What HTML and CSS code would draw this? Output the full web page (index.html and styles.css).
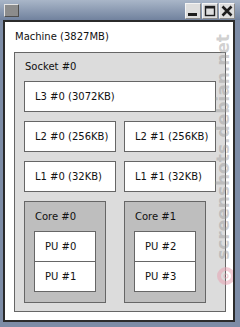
FILE: index.html
```html
<!DOCTYPE html>
<html lang="en">
<head>
  <meta charset="UTF-8">
  <title>lstopo</title>
  <link rel="stylesheet" href="styles.css">
</head>
<body>
  <div class="window">
    <div class="titlebar">
      <div class="app-icon"></div>
      <div class="buttons">
        <span class="btn">
          <svg width="14" height="14" viewBox="0 0 14 14"><rect x="2" y="9" width="9" height="3" fill="#1e1e1e"/></svg>
        </span>
        <span class="btn">
          <svg width="14" height="14" viewBox="0 0 14 14"><rect x="2.5" y="2.5" width="9" height="9" fill="none" stroke="#1e1e1e" stroke-width="1.4"/><rect x="2" y="2" width="10" height="2.5" fill="#1e1e1e"/></svg>
        </span>
        <span class="btn">
          <svg width="14" height="14" viewBox="0 0 14 14"><path d="M2.5 2.5 L11.5 11.5 M11.5 2.5 L2.5 11.5" stroke="#1e1e1e" stroke-width="2.6"/></svg>
        </span>
      </div>
    </div>

    <div class="client">
      <div class="machine">
        <div class="label">Machine (3827MB)</div>

        <div class="socket">
          <div class="label">Socket #0</div>
          <div class="stack">
            <div class="cache">L3 #0 (3072KB)</div>
            <div class="row">
              <div class="cache">L2 #0 (256KB)</div>
              <div class="cache">L2 #1 (256KB)</div>
            </div>
            <div class="row">
              <div class="cache">L1 #0 (32KB)</div>
              <div class="cache">L1 #1 (32KB)</div>
            </div>
            <div class="row">
              <div class="core">
                <div class="label">Core #0</div>
                <div class="pu">PU #0</div>
                <div class="pu">PU #1</div>
              </div>
              <div class="core">
                <div class="label">Core #1</div>
                <div class="pu">PU #2</div>
                <div class="pu">PU #3</div>
              </div>
            </div>
          </div>
        </div>
      </div>

      <!-- watermark overlay -->
      <div class="watermark">screenshots.debian.net</div>
      <svg class="logo" width="22" height="22" viewBox="0 0 22 22">
        <circle cx="11" cy="11" r="7" fill="none" stroke="#e7a3b3" stroke-width="4" opacity="0.55"/>
        <circle cx="11" cy="11" r="2" fill="none" stroke="#e7a3b3" stroke-width="1.2" opacity="0.55"/>
      </svg>
    </div>
  </div>
</body>
</html>
```

FILE: styles.css
```css
* {
  box-sizing: border-box;
}

body {
  margin: 0;
  font-family: "DejaVu Sans", sans-serif;
  font-size: 10px;
  color: #111;
}

.window {
  width: 240px;
  height: 327px;
  background: #7d8ca6;
  display: flex;
  flex-direction: column;
}

/* Barre de titre */
.titlebar {
  height: 20px;
  display: flex;
  justify-content: space-between;
  padding: 3px 5px 0 4px;
  background: linear-gradient(#a9b6c8, #71829e);
}

.app-icon {
  width: 15px;
  height: 13px;
  margin-top: 1px;
  background: #8c8c8c;
  border: 1px solid;
  border-color: #e4e4e4 #4e4e4e #4e4e4e #e4e4e4;
}

.buttons {
  display: flex;
  gap: 1px;
}

.btn {
  width: 16px;
  height: 16px;
  display: flex;
  align-items: center;
  justify-content: center;
  background: #dedede;
  border: 1px solid;
  border-color: #f4f4f4 #8a8a8a #8a8a8a #f4f4f4;
}

.client {
  flex: 1;
  margin: 0 5px 5px 3px;
  border: 2px solid #2b2b2b;
  background: #fff;
  position: relative;
  overflow: hidden;
}

.label {
  line-height: 12px;
  padding-top: 9px;
  padding-left: 1px;
}

.machine {
  padding: 0 7px 0 9px;
}

.machine > .label {
  height: 30px;
}

.socket {
  background: #dcdcdc;
  border: 1px solid #666;
  padding: 0 9px 8px;
}

.socket > .label {
  height: 28px;
  padding-top: 8px;
}

.stack {
  display: flex;
  flex-direction: column;
  gap: 9px;
}

.row {
  display: grid;
  grid-template-columns: 1fr 1fr;
  gap: 8px;
}

.cache, .pu {
  height: 31px;
  background: #fff;
  border: 1px solid #666;
  padding-left: 10px;
  display: flex;
  align-items: center;
}

.core {
  width: 82px;
  background: #bebebe;
  border: 1px solid #666;
  padding: 0 9px 10px;
}

.core > .label {
  height: 29px;
}

.pu + .pu {
  margin-top: -1px;
}

.watermark {
  position: absolute;
  left: 209px;
  top: 12px;
  writing-mode: vertical-rl;
  transform: rotate(180deg);
  font-size: 17px;
  font-weight: bold;
  line-height: 19px;
  color: rgba(150, 150, 150, 0.45);
  white-space: nowrap;
}

.logo {
  position: absolute;
  left: 210px;
  top: 243px;
}
```
